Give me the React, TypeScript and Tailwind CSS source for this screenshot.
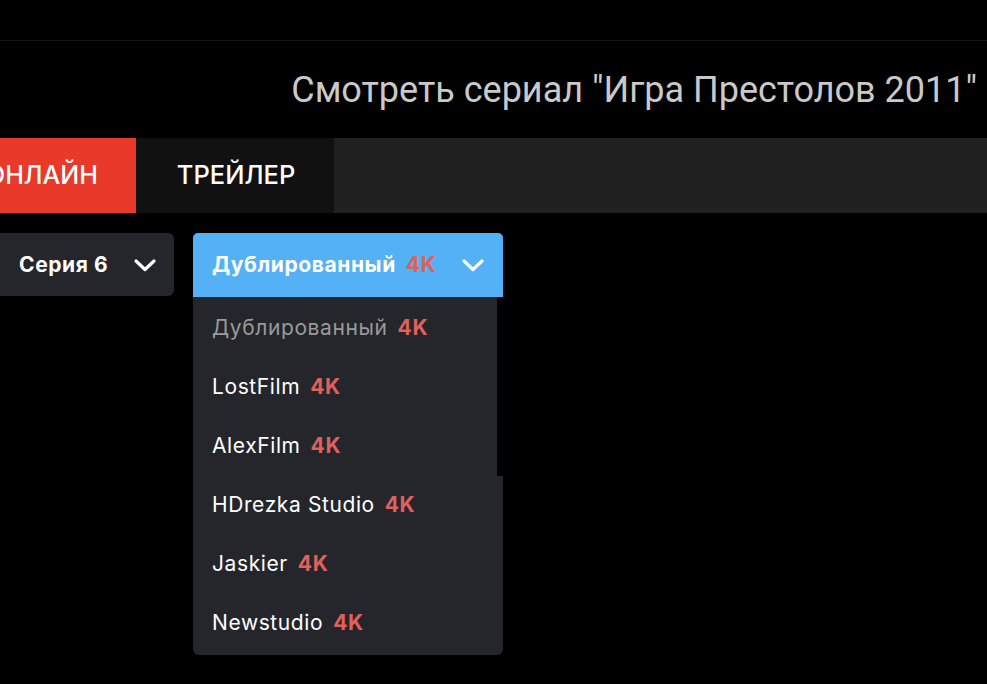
const VOICES = [
  { name: 'Дублированный', active: true },
  { name: 'LostFilm' },
  { name: 'AlexFilm' },
  { name: 'HDrezka Studio' },
  { name: 'Jaskier' },
  { name: 'Newstudio' },
];

function Chevron() {
  return (
    <svg width="26" height="16" viewBox="0 0 26 16" fill="none" className="ml-auto shrink-0">
      <polyline points="4,4 13,12.5 22,4" stroke="white" strokeWidth="3.2" strokeLinecap="round" strokeLinejoin="round" />
    </svg>
  );
}

export default function App() {
  return (
    <div className="w-[987px] h-[684px] overflow-hidden bg-black font-['Inter',sans-serif]">
      {/* top rule */}
      <div className="h-[41px] border-b border-[#141414]" />

      {/* title */}
      <div className="h-[97px] flex items-center justify-end pr-[10px]">
        <h1 className="font-['Roboto',sans-serif] text-[36px] text-[#c9c9c9] whitespace-nowrap">
          Смотреть сериал "Игра Престолов 2011"
        </h1>
      </div>

      {/* tabs */}
      <div className="flex h-[75px] ml-[-54px]">
        <div className="flex items-center bg-[#e8392a] pl-[40px] pr-[38px] text-white text-[25px] font-medium">ОНЛАЙН</div>
        <div className="flex items-center bg-[#111111] pl-[41px] pr-[39px] text-white text-[25.5px] font-medium">ТРЕЙЛЕР</div>
        <div className="flex-1 bg-[#202020]" />
      </div>

      {/* selectors */}
      <div className="flex items-start gap-[19px] mt-[20px] tracking-[0.6px]">
        <button className="flex items-center h-[63px] w-[174px] rounded-r-[6px] bg-[#24262b] pl-[19px] pr-[16px] text-white text-[21px] font-bold">
          <span>Серия 6</span>
          <Chevron />
        </button>

        <div className="w-[310px]">
          <button className="flex items-center w-full h-[64px] rounded-t-[5px] bg-[#55b1f6] pl-[19px] pr-[17px] text-white text-[21px] font-bold">
            <span>Дублированный</span>
            <span className="ml-[10px] text-[#e0605c]">4K</span>
            <Chevron />
          </button>
          <div className="relative rounded-b-[6px] bg-[#24262b] pt-[1px] pb-[3px]">
            <div className="absolute right-0 top-0 w-[6px] h-[179px] bg-black" />
            {VOICES.map((v) => (
              <div key={v.name} className="flex items-center h-[59px] pl-[19px] text-[21px]">
                <span className={v.active ? 'text-[#9a9a9a]' : 'text-white'}>{v.name}</span>
                <span className="ml-[10px] font-bold text-[#e0605c]">4K</span>
              </div>
            ))}
          </div>
        </div>
      </div>
    </div>
  );
}
